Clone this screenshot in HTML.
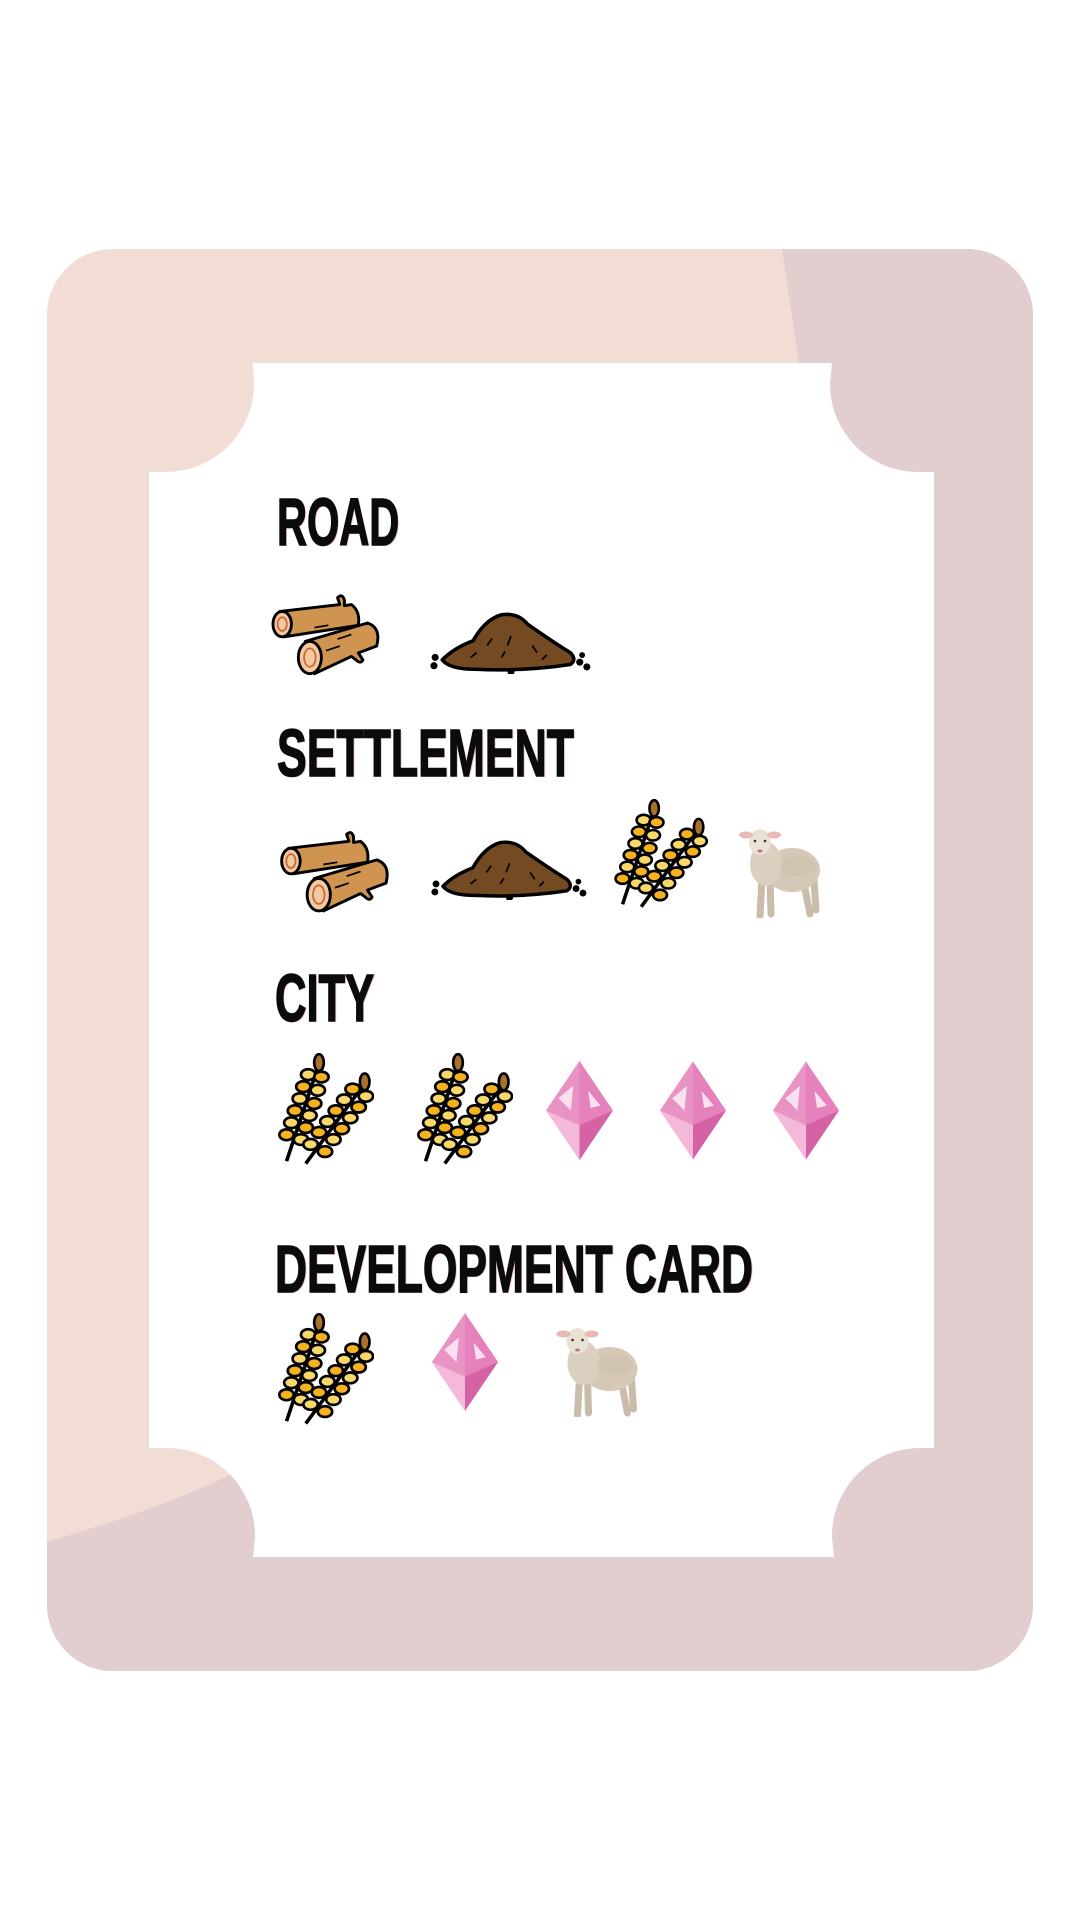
<!DOCTYPE html>
<html><head><meta charset="utf-8">
<style>
html,body{margin:0;padding:0;background:#fff;}
body{width:1080px;height:1920px;position:relative;overflow:hidden;}
svg.bg{position:absolute;left:0;top:0;}
.h{position:absolute;font-family:"Liberation Sans",sans-serif;font-weight:bold;font-size:67px;line-height:1;color:#0b0b0b;white-space:nowrap;transform-origin:0 0;text-shadow:2px 1px 0 #f6cfc6;-webkit-text-stroke:1.5px #0b0b0b;}
.ic{position:absolute;}
</style></head><body>
<svg class="bg" width="1080" height="1920" viewBox="0 0 1080 1920">
<defs>
<clipPath id="card"><rect x="47" y="249" width="986" height="1422" rx="66" ry="66"/></clipPath>
</defs>
<g clip-path="url(#card)">
<rect x="0" y="0" width="1080" height="1920" fill="#f2ddd4"/>
<path d="M782,249 L1100,249 L1100,1720 L0,1720 L0,1555 Q150,1515 240,1470 L799,363 Z" fill="#e2cdcf"/>
</g>
<path d="M253,363 L832,363 L830,384 A88,88 0 0 0 920,472 L934,472 L934,1448 L920,1448 A88,88 0 0 0 832,1537 L834,1557 L253,1557 L255,1537 A88,88 0 0 0 166,1448 L149,1448 L149,472 L166,472 A88,88 0 0 0 254,384 Z" fill="#fff"/>
</svg>

<div class="h" style="left:277px;top:489px;transform:scaleX(0.62)">ROAD</div>
<div class="h" style="left:277px;top:720px;transform:scaleX(0.665)">SETTLEMENT</div>
<div class="h" style="left:275px;top:965px;transform:scaleX(0.65)">CITY</div>
<div class="h" style="left:275px;top:1236px;transform:scaleX(0.662)">DEVELOPMENT CARD</div>

<svg width="0" height="0" style="position:absolute">
<defs>
<g id="logs">
<path d="M10,16 L62,10 L60,4 Q64,0 66,6 L66,11 L72,10 Q80,16 78,28 L14,38 Z" fill="#cf9450" stroke="#000" stroke-width="2.5" stroke-linejoin="round"/>
<ellipse cx="12" cy="27" rx="8" ry="11" fill="#f5c9a0" stroke="#000" stroke-width="2.5"/>
<ellipse cx="12" cy="27" rx="4" ry="6" fill="none" stroke="#c46a3a" stroke-width="1.5"/>
<path d="M32,42 L86,26 Q98,30 94,46 L78,52 L82,58 Q80,62 76,58 L72,55 L40,70 Z" fill="#cf9450" stroke="#000" stroke-width="2.5" stroke-linejoin="round"/>
<ellipse cx="36" cy="56" rx="10" ry="14" fill="#f5c9a0" stroke="#000" stroke-width="2.5"/>
<ellipse cx="36" cy="56" rx="5" ry="8" fill="none" stroke="#c46a3a" stroke-width="1.5"/>
<path d="M40,30 L52,28 M60,40 L72,36 M50,50 L62,46" stroke="#000" stroke-width="1.5"/>
</g>
<g id="dirt">
<path d="M12,42 Q22,32 38,26 Q48,8 62,4 Q76,2 84,12 Q104,26 120,36 Q126,42 120,46 Q80,52 40,50 Q18,50 12,42 Z" fill="#744a22" stroke="#000" stroke-width="3" stroke-linejoin="round"/>
<path d="M50,30 l4,-6 M70,22 l-3,8 M88,30 l4,6 M36,40 l5,-4 M100,38 l-4,4 M62,40 l3,-5" stroke="#000" stroke-width="1.5"/>
<circle cx="6" cy="40" r="3" fill="#000"/><circle cx="5" cy="47" r="3" fill="#000"/>
<circle cx="128" cy="44" r="3" fill="#000"/><circle cx="134" cy="48" r="3" fill="#000"/><circle cx="130" cy="38" r="2.5" fill="#000"/>
<circle cx="70" cy="52" r="3" fill="#000"/>
</g>
<g id="wheat" stroke="#000" stroke-width="2.2">
<path d="M8,90 L36,6" fill="none" stroke-width="3"/>
<path d="M24,92 L74,24" fill="none" stroke-width="3"/>
<g fill="#f5b21e">
<ellipse cx="8" cy="68" rx="6" ry="4.5"/><ellipse cx="20" cy="72" rx="6" ry="4.5" fill="#f8d86a"/>
<ellipse cx="12" cy="58" rx="6" ry="4.5" fill="#f8d86a"/><ellipse cx="24" cy="62" rx="6" ry="4.5"/>
<ellipse cx="15" cy="48" rx="6" ry="4.5"/><ellipse cx="27" cy="52" rx="6" ry="4.5" fill="#f8d86a"/>
<ellipse cx="19" cy="38" rx="6" ry="4.5" fill="#f8d86a"/><ellipse cx="31" cy="42" rx="6" ry="4.5"/>
<ellipse cx="22" cy="28" rx="6" ry="4.5"/><ellipse cx="34" cy="31" rx="6" ry="4.5" fill="#f8d86a"/>
<ellipse cx="26" cy="18" rx="6" ry="4.5" fill="#f8d86a"/><ellipse cx="37" cy="20" rx="6" ry="4.5"/>
<ellipse cx="35" cy="8" rx="4" ry="7" fill="#a8722c"/>
<ellipse cx="28" cy="76" rx="6" ry="4.5" fill="#f8d86a"/><ellipse cx="40" cy="82" rx="6" ry="4.5"/>
<ellipse cx="35" cy="66" rx="6" ry="4.5"/><ellipse cx="47" cy="72" rx="6" ry="4.5" fill="#f8d86a"/>
<ellipse cx="42" cy="57" rx="6" ry="4.5" fill="#f8d86a"/><ellipse cx="54" cy="63" rx="6" ry="4.5"/>
<ellipse cx="49" cy="48" rx="6" ry="4.5"/><ellipse cx="61" cy="54" rx="6" ry="4.5" fill="#f8d86a"/>
<ellipse cx="56" cy="39" rx="6" ry="4.5" fill="#f8d86a"/><ellipse cx="68" cy="45" rx="6" ry="4.5"/>
<ellipse cx="63" cy="30" rx="6" ry="4.5"/><ellipse cx="74" cy="36" rx="6" ry="4.5" fill="#f8d86a"/>
<ellipse cx="73" cy="24" rx="4" ry="7" fill="#a8722c"/>
</g>
</g>
<g id="gem">
<polygon points="27,0 54,40 27,80 0,40" fill="#e98fc4"/>
<polygon points="27,0 27,80 0,40" fill="#f3b8da"/>
<polygon points="27,0 54,40 27,52 0,40" fill="#e27ab6" opacity="0.6"/>
<polygon points="27,52 54,40 27,80" fill="#cc4f97" opacity="0.7"/>
<polygon points="10,30 22,20 20,40" fill="#fbe1ef"/>
<polygon points="34,24 44,36 36,38" fill="#fbe1ef"/>
</g>
<g id="sheep">
<path d="M22,52 L20,90 M30,54 L31,88 M64,58 L70,88 M74,54 L76,84" stroke="#c9bcaa" stroke-width="7" stroke-linecap="round"/>
<ellipse cx="52" cy="44" rx="28" ry="22" fill="#d6c9b8"/>
<ellipse cx="26" cy="38" rx="16" ry="22" fill="#dbcfbf"/>
<ellipse cx="20" cy="16" rx="11" ry="13" fill="#ebe2d6"/>
<ellipse cx="6" cy="9" rx="7" ry="3.5" fill="#e8b9b5"/><ellipse cx="34" cy="9" rx="7" ry="3.5" fill="#e8b9b5"/>
<circle cx="15" cy="15" r="1.3" fill="#333"/><circle cx="25" cy="15" r="1.3" fill="#333"/>
<ellipse cx="20" cy="25" rx="2.5" ry="1.5" fill="#b7707a"/>
<ellipse cx="58" cy="40" rx="18" ry="10" fill="#cbbda9" opacity="0.5"/>
</g>
</defs></svg>

<!-- ROAD -->
<svg class="ic" style="left:268px;top:593px" width="116" height="83" viewBox="0 0 100 72"><use href="#logs"/></svg>
<svg class="ic" style="left:424px;top:610px" width="174" height="64" viewBox="0 0 140 54"><use href="#dirt"/></svg>
<!-- SETTLEMENT -->
<svg class="ic" style="left:277px;top:829px" width="116" height="85" viewBox="0 0 100 72"><use href="#logs"/></svg>
<svg class="ic" style="left:424px;top:838px" width="171" height="62" viewBox="0 0 140 54"><use href="#dirt"/></svg>
<svg class="ic" style="left:611px;top:799px" width="98" height="110" viewBox="0 0 80 94"><use href="#wheat"/></svg>
<svg class="ic" style="left:734px;top:826px" width="94" height="92" viewBox="0 0 82 92"><use href="#sheep"/></svg>
<!-- CITY -->
<svg class="ic" style="left:276px;top:1053px" width="98" height="113" viewBox="0 0 80 94"><use href="#wheat"/></svg>
<svg class="ic" style="left:415px;top:1053px" width="98" height="113" viewBox="0 0 80 94"><use href="#wheat"/></svg>
<svg class="ic" style="left:546px;top:1061px" width="67" height="99" viewBox="0 0 54 80"><use href="#gem"/></svg>
<svg class="ic" style="left:660px;top:1061px" width="66" height="99" viewBox="0 0 54 80"><use href="#gem"/></svg>
<svg class="ic" style="left:773px;top:1061px" width="66" height="99" viewBox="0 0 54 80"><use href="#gem"/></svg>
<!-- DEV CARD -->
<svg class="ic" style="left:276px;top:1313px" width="98" height="113" viewBox="0 0 80 94"><use href="#wheat"/></svg>
<svg class="ic" style="left:432px;top:1313px" width="66" height="98" viewBox="0 0 54 80"><use href="#gem"/></svg>
<svg class="ic" style="left:552px;top:1325px" width="93" height="92" viewBox="0 0 82 92"><use href="#sheep"/></svg>
</body></html>
